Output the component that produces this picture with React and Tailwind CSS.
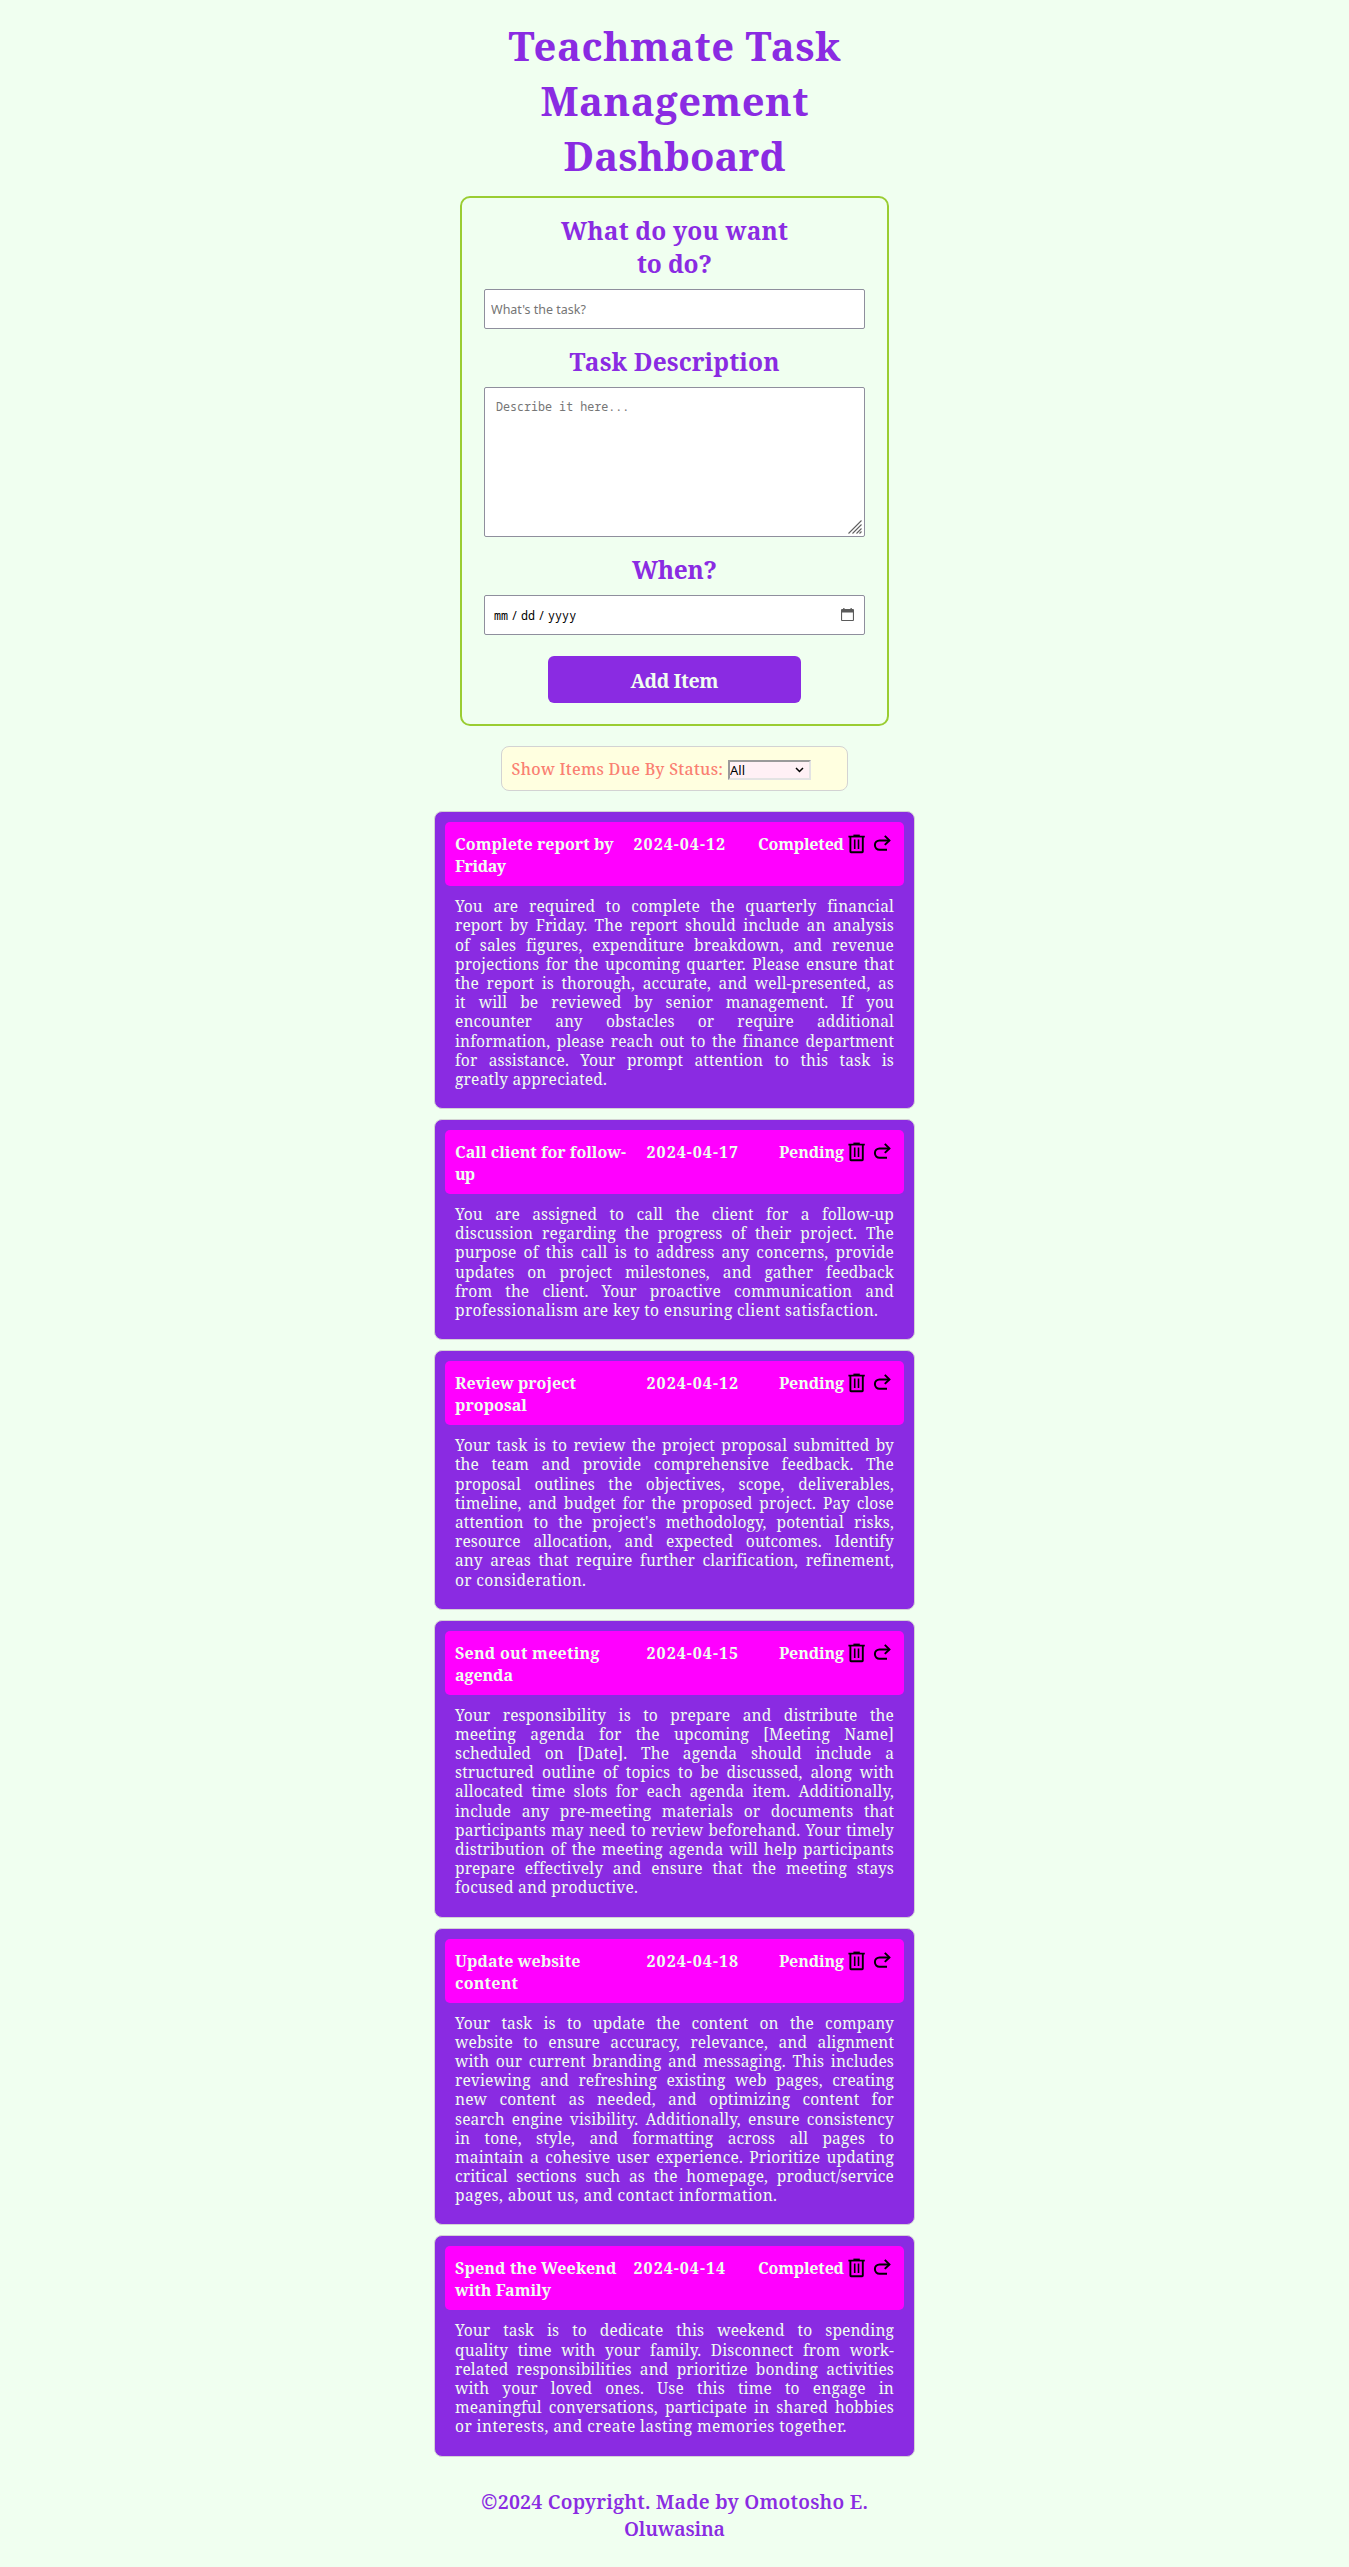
import { useLayoutEffect, useRef } from "react";

const SERIF = "font-['Noto_Serif','DejaVu_Serif_Condensed','DejaVu_Serif',serif]";

// Spreads the letters of one line so that it spans the given width.
function Fit({ width, className = "", children }) {
  const ref = useRef(null);
  useLayoutEffect(() => {
    const el = ref.current;
    el.style.letterSpacing = "0px";
    const natural = el.getBoundingClientRect().width;
    const spacing = (width - natural) / (children.length - 1);
    el.style.letterSpacing = spacing + "px";
    el.style.marginRight = -spacing + "px";
  }, [width, children]);
  return (
    <span ref={ref} className={`inline-block whitespace-pre ${className}`}>
      {children}
    </span>
  );
}

const tasks = [
  {
    title: [["Complete report by", 158.5], ["Friday", 51]],
    date: "2024-04-12",
    status: "Completed",
    last: 152,
    lines: [
      "You are required to complete the quarterly financial",
      "report by Friday. The report should include an analysis",
      "of sales figures, expenditure breakdown, and revenue",
      "projections for the upcoming quarter. Please ensure that",
      "the report is thorough, accurate, and well-presented, as",
      "it will be reviewed by senior management. If you",
      "encounter any obstacles or require additional",
      "information, please reach out to the finance department",
      "for assistance. Your prompt attention to this task is",
      "greatly appreciated.",
    ],
  },
  {
    title: [["Call client for follow-", 171], ["up", 20]],
    date: "2024-04-17",
    status: "Pending",
    last: 423,
    lines: [
      "You are assigned to call the client for a follow-up",
      "discussion regarding the progress of their project. The",
      "purpose of this call is to address any concerns, provide",
      "updates on project milestones, and gather feedback",
      "from the client. Your proactive communication and",
      "professionalism are key to ensuring client satisfaction.",
    ],
  },
  {
    title: [["Review project", 121], ["proposal", 72]],
    date: "2024-04-12",
    status: "Pending",
    last: 131,
    lines: [
      "Your task is to review the project proposal submitted by",
      "the team and provide comprehensive feedback. The",
      "proposal outlines the objectives, scope, deliverables,",
      "timeline, and budget for the proposed project. Pay close",
      "attention to the project's methodology, potential risks,",
      "resource allocation, and expected outcomes. Identify",
      "any areas that require further clarification, refinement,",
      "or consideration.",
    ],
  },
  {
    title: [["Send out meeting", 144.5], ["agenda", 58]],
    date: "2024-04-15",
    status: "Pending",
    last: 183,
    lines: [
      "Your responsibility is to prepare and distribute the",
      "meeting agenda for the upcoming [Meeting Name]",
      "scheduled on [Date]. The agenda should include a",
      "structured outline of topics to be discussed, along with",
      "allocated time slots for each agenda item. Additionally,",
      "include any pre-meeting materials or documents that",
      "participants may need to review beforehand. Your timely",
      "distribution of the meeting agenda will help participants",
      "prepare effectively and ensure that the meeting stays",
      "focused and productive.",
    ],
  },
  {
    title: [["Update website", 125.5], ["content", 63]],
    date: "2024-04-18",
    status: "Pending",
    last: 322,
    lines: [
      "Your task is to update the content on the company",
      "website to ensure accuracy, relevance, and alignment",
      "with our current branding and messaging. This includes",
      "reviewing and refreshing existing web pages, creating",
      "new content as needed, and optimizing content for",
      "search engine visibility. Additionally, ensure consistency",
      "in tone, style, and formatting across all pages to",
      "maintain a cohesive user experience. Prioritize updating",
      "critical sections such as the homepage, product/service",
      "pages, about us, and contact information.",
    ],
  },
  {
    title: [["Spend the Weekend", 161.5], ["with Family", 96]],
    date: "2024-04-14",
    status: "Completed",
    last: 391.5,
    lines: [
      "Your task is to dedicate this weekend to spending",
      "quality time with your family. Disconnect from work-",
      "related responsibilities and prioritize bonding activities",
      "with your loved ones. Use this time to engage in",
      "meaningful conversations, participate in shared hobbies",
      "or interests, and create lasting memories together.",
    ],
  },
];

function TrashIcon() {
  return (
    <svg className="block h-5 w-[18px]" viewBox="0 0 18 20" fill="none" stroke="#000">
      <path d="M.4 2.6h16.4" strokeWidth="1.7" />
      <path d="M5.4 1.3h6.4" strokeWidth="1.4" />
      <path d="M2.4 3v14.6q0 .6.6.6h11.2q.6 0 .6-.6V3" strokeWidth="1.9" />
      <path d="M6.7 5.6v9.4M10.5 5.6v9.4" strokeWidth="1.6" />
    </svg>
  );
}

function ForwardIcon() {
  return (
    <svg className="block h-5 w-5" viewBox="0 0 20 20" fill="none" stroke="#000" strokeWidth="2">
      <path d="M17.2 6.4H7.6a4.7 4.7 0 0 0 0 9.4h7.4" />
      <path d="M12.8 1.9l4.6 4.5-4.6 4.5" />
    </svg>
  );
}

function Card({ task }) {
  const done = task.status === "Completed";
  return (
    <article className="w-[481px] rounded-[8px] border border-[#d3d3d3] bg-[#8a2be2] px-[10px] pt-[10px] pb-[19px] text-[#f0fff0]">
      <header className="flex h-16 rounded-[5px] bg-[#ff00ff] px-[10px] pt-[11px] text-[16px] leading-[22px] font-bold">
        <div className="min-w-0 flex-1">
          {task.title.map(([text, width]) => (
            <div key={text} className="h-[22px]">
              <Fit width={width}>{text}</Fit>
            </div>
          ))}
        </div>
        <div className={done ? "w-[124.5px]" : "w-[132.5px]"}>
          <Fit width={91.5}>{task.date}</Fit>
        </div>
        <div className={done ? "w-[90px]" : "w-[69px]"}>
          <Fit width={done ? 86 : 65}>{task.status}</Fit>
        </div>
        <div className="flex w-[46px] gap-[6px] pt-[1px]">
          <TrashIcon />
          <ForwardIcon />
        </div>
      </header>
      <p className="mt-[11px] px-[10px] text-[15.5px] leading-[19.2px]">
        {task.lines.map((line, i) =>
          i < task.lines.length - 1 ? (
            <span
              key={i}
              className="block h-[19.2px] tracking-[0.14px] whitespace-nowrap [text-align-last:justify]"
            >
              {line}
            </span>
          ) : (
            <span key={i} className="block h-[19.2px]">
              <Fit width={task.last}>{line}</Fit>
            </span>
          ),
        )}
      </p>
    </article>
  );
}

function Lines({ rows, className }) {
  return rows.map(([text, width]) => (
    <div key={text} className={className}>
      <Fit width={width}>{text}</Fit>
    </div>
  ));
}

const h2 = "h-[33px] text-center text-[24.5px] leading-[31px] font-bold text-[#8a2be2]";
const field = "block w-full rounded-[2px] border border-[#8f8f9d] bg-white";

export default function App() {
  return (
    <div className={`flex min-h-[2567px] flex-col items-center bg-[#f0fff0] pt-[19px] ${SERIF}`}>
      <h1 className="text-center text-[40px] leading-[53px] font-bold text-[#8a2be2]">
        <Lines
          className="h-[55px]"
          rows={[["Teachmate Task", 332], ["Management", 268], ["Dashboard", 222]]}
        />
      </h1>

      <form className="mt-3 h-[530px] w-[429px] rounded-[10px] border-2 border-[#9acd32] px-[22px] pt-[17px]">
        <Lines className={h2} rows={[["What do you want", 227], ["to do?", 75]]} />
        <input
          type="text"
          placeholder="What's the task?"
          className={`${field} mt-[8px] h-10 px-[6px] font-['Noto_Sans',sans-serif] text-[12.5px] placeholder:text-[#757575]`}
        />
        <div className="mt-[17px]">
          <Lines className={h2} rows={[["Task Description", 210]]} />
        </div>
        <div className="relative mt-[8px]">
          <textarea
            placeholder="Describe it here..."
            className={`${field} h-[150px] resize-none px-[11px] py-[11px] font-['Noto_Sans_Mono','DejaVu_Sans_Mono',monospace] text-[11.7px] leading-[15px] placeholder:text-[#757575]`}
          />
          <svg
            className="absolute right-[3px] bottom-[3px] size-[14px]"
            viewBox="0 0 14 14"
            stroke="#606060"
            strokeWidth="1.1"
          >
            <path d="M.5 13.5l13-13M4.5 13.5l9-9M8.5 13.5l5-5M11.5 13.5l2-2" />
          </svg>
        </div>
        <div className="mt-[17px]">
          <Lines className={h2} rows={[["When?", 85]]} />
        </div>
        <div
          className={`${field} mt-[8px] flex h-10 items-center px-[9px] pt-px font-['Noto_Sans_Mono','DejaVu_Sans_Mono',monospace] text-[11.7px] text-black`}
        >
          <span>mm</span>
          <span className="mx-[3px]">/</span>
          <span>dd</span>
          <span className="mx-[3px]">/</span>
          <span>yyyy</span>
          <svg className="mr-px mb-[2px] ml-auto h-[13px] w-[13px]" viewBox="0 0 13 13">
            <path
              fill="#5b5b5b"
              fillRule="evenodd"
              d="M2.2 0h1.3v1h6V0h1.3v1H12q1 0 1 1v10q0 1-1 1H1q-1 0-1-1V2q0-1 1-1h1.2zM1.1 4.6v7.3h10.8V4.6z"
            />
          </svg>
        </div>
        <button
          type="button"
          className="mx-auto mt-[21px] block h-[47px] w-[253px] rounded-[6px] bg-[#8a2be2] pt-[2px] text-[19.5px] font-bold text-[#f0fff0]"
        >
          <Fit width={88}>Add Item</Fit>
        </button>
      </form>

      <div className="mt-5 flex h-[45px] w-[347px] items-center rounded-[8px] border border-[#d3d3d3] bg-[#ffffe0] pl-[9.5px] text-[16px] text-[#fa8072]">
        <Fit width={211.5} className="shrink-0 font-medium">
          Show Items Due By Status:
        </Fit>
        <div className="relative mt-[3px] ml-[5px] h-5 w-[83px] shrink-0">
          <select className="block h-5 w-[83px] appearance-none border-2 border-t-[#9a9a9a] border-r-[#e3e3e3] border-b-[#e3e3e3] border-l-[#9a9a9a] bg-[#fff0f5] font-['Noto_Sans',sans-serif] text-[13px] leading-4 text-black">
            <option>All</option>
            <option>Completed</option>
            <option>Pending</option>
          </select>
          <svg
            className="pointer-events-none absolute top-[7px] right-[7px] h-[6px] w-[9px]"
            viewBox="0 0 9 6"
            fill="none"
            stroke="#000"
            strokeWidth="1.5"
          >
            <path d="M1 1l3.5 3.5L8 1" />
          </svg>
        </div>
      </div>

      <main className="mt-[20.2px] flex flex-col gap-[10px]">
        {tasks.map((task) => (
          <Card key={task.title[0][0]} task={task} />
        ))}
      </main>

      <footer className="mt-[31.5px] text-center text-[19.5px] leading-[27px] font-semibold text-[#8a2be2]">
        <Lines
          className="h-[27px]"
          rows={[["©2024 Copyright. Made by Omotosho E.", 387], ["Oluwasina", 101]]}
        />
      </footer>
    </div>
  );
}
